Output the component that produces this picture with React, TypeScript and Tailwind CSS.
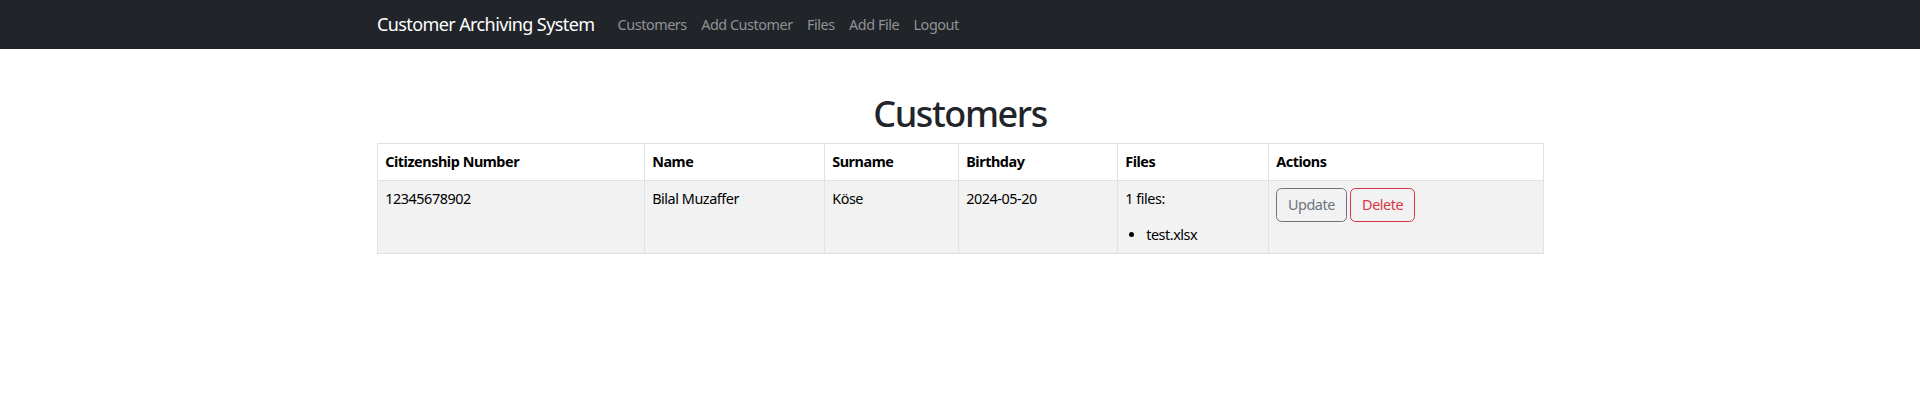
import React from "react";

type Customer = {
  citizenshipNumber: string;
  name: string;
  surname: string;
  birthday: string;
  files: string[];
};

const customers: Customer[] = [
  {
    citizenshipNumber: "12345678902",
    name: "Bilal Muzaffer",
    surname: "Köse",
    birthday: "2024-05-20",
    files: ["test.xlsx"],
  },
];

const navLinks = ["Customers", "Add Customer", "Files", "Add File", "Logout"];

// Top navigation bar
function Navbar() {
  return (
    <nav className="bg-[#212529] h-[49px]">
      <div className="mx-auto w-[1166px] h-full flex items-center">
        <a className="text-white text-[18px] leading-[27px] tracking-[-0.6px] mr-[16px] whitespace-nowrap">
          Customer Archiving System
        </a>
        <ul className="flex items-center">
          {navLinks.map((link) => (
            <li key={link}>
              <a className="block px-[7.2px] py-[7.2px] text-[14.4px] leading-[21.6px] text-[#909294] whitespace-nowrap">
                {link}
              </a>
            </li>
          ))}
        </ul>
      </div>
    </nav>
  );
}

const headers = [
  { label: "Citizenship Number", w: "w-[267px]" },
  { label: "Name", w: "w-[180px]" },
  { label: "Surname", w: "w-[134px]" },
  { label: "Birthday", w: "w-[159px]" },
  { label: "Files", w: "w-[151px]" },
  { label: "Actions", w: "w-[275px]" },
];

const cell = "border border-[#dee2e6] px-[7.2px] py-[7.2px] align-top text-left";

export default function App() {
  return (
    <div className="min-h-screen bg-white font-['Noto_Sans','Open_Sans',sans-serif] text-[14.4px] leading-[21.6px] tracking-[-0.45px] text-[#212529]">
      <Navbar />

      <div className="mx-auto w-[1166px] mt-[43.2px]">
        <h1 className="text-center text-[36px] leading-[43.2px] tracking-[-1.4px] font-medium mb-[7.2px]">
          Customers
        </h1>

        {/* Customers table */}
        <table className="w-full table-fixed border-collapse border border-[#dee2e6] text-black">
          <thead>
            <tr>
              {headers.map((h) => (
                <th key={h.label} className={`${cell} ${h.w} font-bold`}>
                  {h.label}
                </th>
              ))}
            </tr>
          </thead>
          <tbody>
            {customers.map((c) => (
              <tr key={c.citizenshipNumber} className="bg-[#f2f2f2]">
                <td className={cell}>{c.citizenshipNumber}</td>
                <td className={cell}>{c.name}</td>
                <td className={cell}>{c.surname}</td>
                <td className={cell}>{c.birthday}</td>
                <td className={cell}>
                  <div className="mb-[14.4px]">{c.files.length} files:</div>
                  <ul className="list-disc pl-[21px]">
                    {c.files.map((f) => (
                      <li key={f}>{f}</li>
                    ))}
                  </ul>
                </td>
                <td className={cell}>
                  <div className="flex gap-[3.6px]">
                    <button className="h-[34px] px-[10.8px] border border-[#6c757d] text-[#6c757d] rounded-[5.4px] text-[14.4px] leading-[21.6px]">
                      Update
                    </button>
                    <button className="h-[34px] px-[10.8px] border border-[#dc3545] text-[#dc3545] rounded-[5.4px] text-[14.4px] leading-[21.6px]">
                      Delete
                    </button>
                  </div>
                </td>
              </tr>
            ))}
          </tbody>
        </table>
      </div>
    </div>
  );
}
